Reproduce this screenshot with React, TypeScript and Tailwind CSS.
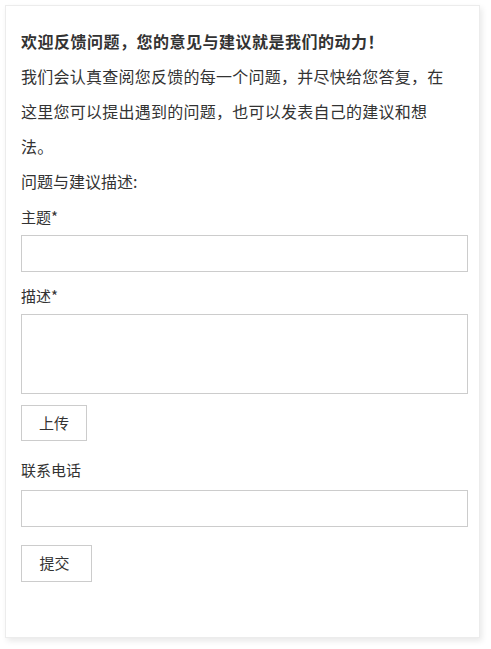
import React from "react";

const font = {
  fontFamily: '"Microsoft YaHei", "Noto Sans CJK SC", "Liberation Sans", sans-serif',
};

function Label({ children }: { children: React.ReactNode }) {
  return <label className="block text-[15px] leading-[22px] text-[#333]">{children}</label>;
}

export default function App() {
  return (
    <div style={font} className="w-[491px] h-[649px] bg-white pt-[5px] pl-[5px]">
      <section className="w-[475px] h-[633px] bg-white border border-[#ececec] shadow-[2px_3px_6px_rgba(0,0,0,0.09)] pl-[15px] pr-[11px] pt-[23px]">
        <h1 className="text-[16px] leading-[24px] font-bold tracking-[0.5px] text-[#333]">
          欢迎反馈问题，您的意见与建议就是我们的动力！
        </h1>
        <p className="mt-[6px] whitespace-nowrap text-[16px] leading-[35px] tracking-[0.25px] text-[#333]">
          我们会认真查阅您反馈的每一个问题，并尽快给您答复，在
          <br />
          这里您可以提出遇到的问题，也可以发表自己的建议和想
          <br />
          法。
        </p>
        <p className="mt-[5px] text-[16px] leading-[24px] text-[#333]">问题与建议描述:</p>

        <form className="flex flex-col" onSubmit={(e) => e.preventDefault()}>
          <div className="mt-[13px]">
            <Label>主题*</Label>
          </div>
          <input
            type="text"
            className="mt-[7px] h-[37px] w-full border border-[#cccccc] bg-white px-2 text-[15px] outline-none"
          />
          <div className="mt-[13px]">
            <Label>描述*</Label>
          </div>
          <textarea className="mt-[7px] h-[80px] w-full resize-none border border-[#cccccc] bg-white px-2 py-1 text-[15px] outline-none" />
          <div className="mt-[11px]">
            <button
              type="button"
              className="h-[36px] w-[66px] border border-[#cccccc] bg-white text-[15px] text-[#333]"
            >
              上传
            </button>
          </div>
          <div className="mt-[18px]">
            <Label>联系电话</Label>
          </div>
          <input
            type="tel"
            className="mt-[9px] h-[37px] w-full border border-[#cccccc] bg-white px-2 text-[15px] outline-none"
          />
          <div className="mt-[18px]">
            <button
              type="submit"
              className="h-[37px] w-[71px] border border-[#cccccc] bg-white pr-[4px] text-[15px] text-[#333]"
            >
              提交
            </button>
          </div>
        </form>
      </section>
    </div>
  );
}
